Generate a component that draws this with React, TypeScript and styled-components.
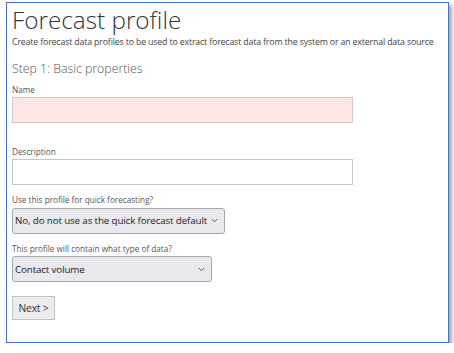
import React from 'react'
import styled, { createGlobalStyle } from 'styled-components'

const GlobalStyle = createGlobalStyle`
  html, body {
    margin: 0;
    padding: 0;
    background: #ffffff;
  }
  body {
    font-family: "Open Sans", "Noto Sans", sans-serif;
    color: #333333;
  }
`

const Frame = styled.div`
  box-sizing: border-box;
  width: 443px;
  height: 341px;
  margin: 2px 0 0 6px;
  border: 1.5px solid #4472c4;
  background: #ffffff;
  box-shadow: 3px 3px 4px rgba(0, 0, 0, 0.35);
  padding: 0 0 0 5px;
  display: flex;
  flex-direction: column;
`

const Title = styled.h1`
  margin: 2px 0 0 0;
  font-size: 24.3px;
  font-weight: 300;
  line-height: 30px;
  color: #333333;
`

const Subtitle = styled.p`
  margin: 0;
  font-size: 8.8px;
  letter-spacing: -0.16px;
  line-height: 14px;
  color: #444444;
  white-space: nowrap;
`

const StepTitle = styled.h2`
  margin: 11px 0 0 0;
  font-size: 12.3px;
  font-weight: 300;
  line-height: 18px;
  color: #555555;
`

const Field = styled.div<{ $gap?: number }>`
  display: flex;
  flex-direction: column;
  margin-top: ${p => p.$gap ?? 0}px;
`

const Label = styled.label`
  font-size: 8.2px;
  line-height: 10px;
  color: #555555;
  margin-bottom: 2px;
`

const TextInput = styled.input<{ $invalid?: boolean }>`
  box-sizing: border-box;
  width: 341px;
  height: 26px;
  margin: 0;
  border: 1px solid ${p => (p.$invalid ? '#d9c6c4' : '#c6c6c6')};
  background: ${p => (p.$invalid ? '#fde7e4' : '#ffffff')};
  outline: none;
`

const SelectWrap = styled.div<{ $width: number }>`
  position: relative;
  width: ${p => p.$width}px;
`

const Select = styled.select`
  box-sizing: border-box;
  width: 100%;
  height: 26px;
  margin: 0;
  padding: 0 16px 0 2px;
  appearance: none;
  -webkit-appearance: none;
  border: 1px solid #a8a8ac;
  border-radius: 3px;
  background: #e9e9ed;
  font-family: "Open Sans", "Noto Sans", sans-serif;
  font-size: 9.8px;
  letter-spacing: -0.14px;
  color: #222222;
  outline: none;
`

const Chevron = styled.svg`
  position: absolute;
  right: 7px;
  top: 11px;
  width: 7px;
  height: 5px;
  pointer-events: none;
`

const NextButton = styled.button`
  box-sizing: border-box;
  align-self: flex-start;
  width: 43px;
  height: 24px;
  margin-top: 14px;
  padding: 0;
  border: 1px solid #c3c3c3;
  background: #ececec;
  font-family: "Open Sans", "Noto Sans", sans-serif;
  font-size: 10.3px;
  letter-spacing: -0.2px;
  color: #333333;
`

const ArrowDown = () => (
  <Chevron viewBox="0 0 7 5">
    <path d="M0.8 1 L3.5 3.8 L6.2 1" fill="none" stroke="#555555" strokeWidth="1" />
  </Chevron>
)

export default function App() {
  return (
    <>
      <GlobalStyle />
      <Frame>
        <Title>Forecast profile</Title>
        <Subtitle>
          Create forecast data profiles to be used to extract forecast data from the system or an external data source
        </Subtitle>
        <StepTitle>Step 1: Basic properties</StepTitle>
        <Field $gap={7}>
          <Label>Name</Label>
          <TextInput $invalid />
        </Field>
        <Field $gap={24}>
          <Label>Description</Label>
          <TextInput />
        </Field>
        <Field $gap={10}>
          <Label>Use this profile for quick forecasting?</Label>
          <SelectWrap $width={213}>
            <Select defaultValue="no">
              <option value="no">No, do not use as the quick forecast default</option>
            </Select>
            <ArrowDown />
          </SelectWrap>
        </Field>
        <Field $gap={10}>
          <Label>This profile will contain what type of data?</Label>
          <SelectWrap $width={200}>
            <Select defaultValue="contact">
              <option value="contact">Contact volume</option>
            </Select>
            <ArrowDown />
          </SelectWrap>
        </Field>
        <NextButton>Next &gt;</NextButton>
      </Frame>
    </>
  )
}
